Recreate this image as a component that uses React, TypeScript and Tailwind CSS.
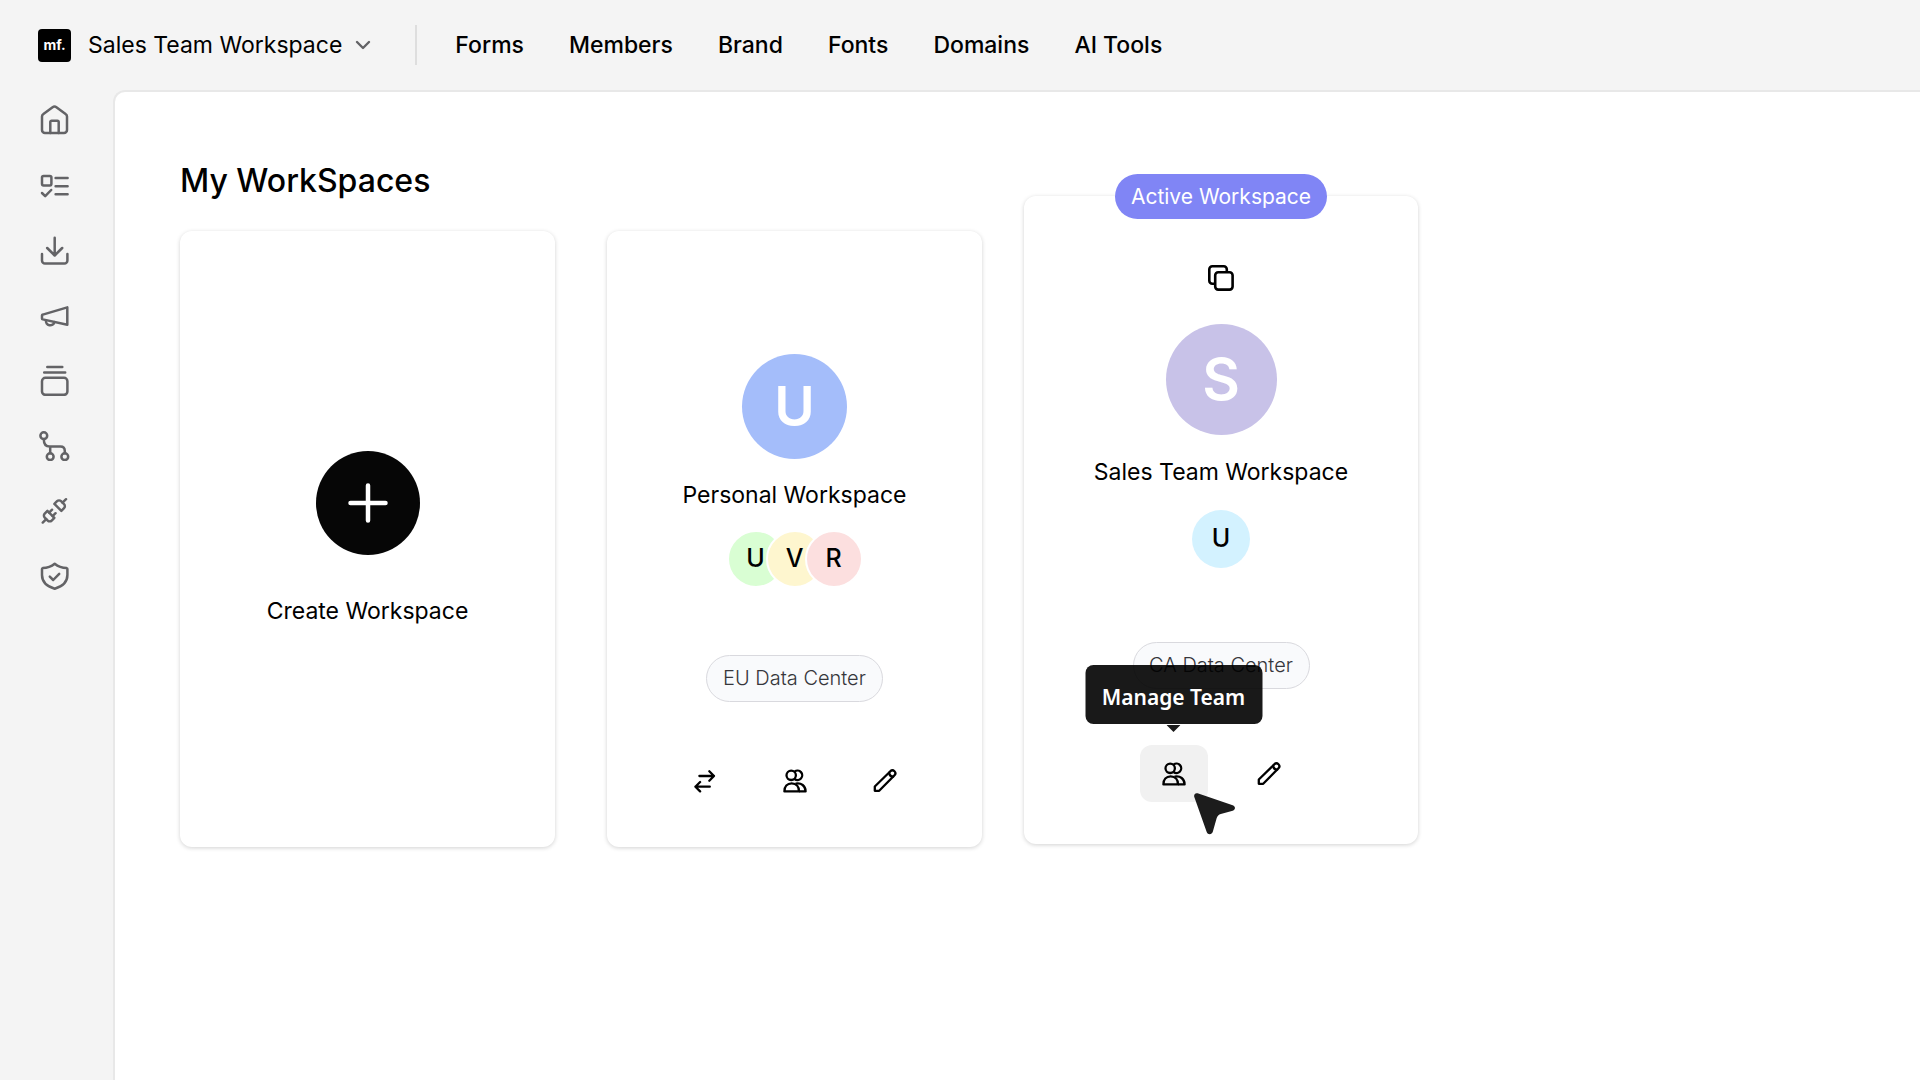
import React from 'react';
import type { ReactNode } from 'react';

interface Member {
  letter: string;
  color: string;
}

const NAV_LINKS = ['Forms', 'Members', 'Brand', 'Fonts', 'Domains', 'AI Tools'];

const PERSONAL_MEMBERS: Member[] = [
  { letter: 'U', color: 'bg-[#d9fed3]' },
  { letter: 'V', color: 'bg-[#fef6cf]' },
  { letter: 'R', color: 'bg-[#fcdfdf]' },
];

const SIDEBAR: { label: string; icon: ReactNode }[] = [
  {
    label: 'Home',
    icon: (
      <>
        <path d="M4 12.6c0-1.1.5-2 1.4-2.6l9.2-6.8a3.2 3.2 0 0 1 3.8 0l9.2 6.8c.9.6 1.4 1.5 1.4 2.6V26a3 3 0 0 1-3 3H7a3 3 0 0 1-3-3Z" />
        <path d="M12.3 29V18a1.3 1.3 0 0 1 1.3-1.3h5.8a1.3 1.3 0 0 1 1.3 1.3v11" />
      </>
    ),
  },
  {
    label: 'Tasks',
    icon: (
      <>
        <rect x="4" y="7" width="9.4" height="9.4" rx="1.6" />
        <path d="M17.6 9h12M17.6 17.2h12M17.6 25.3h12M4 24l3.2 3.2 6-6.2" />
      </>
    ),
  },
  {
    label: 'Downloads',
    icon: <path d="M16.7 3.7v17.6M9.2 14l7.5 7.5 7.5-7.5M4 20v6.5a3 3 0 0 0 3 3h19.4a3 3 0 0 0 3-3V20" />,
  },
  {
    label: 'Campaigns',
    icon: (
      <>
        <path d="M4 16.6c0-.5.3-.9.8-1L29.3 8.4v17.4L4.8 20.4c-.5-.1-.8-.5-.8-1Z" />
        <path d="M8 21.3a4.3 4.3 0 0 0 8.4 1.8" />
      </>
    ),
  },
  {
    label: 'Collections',
    icon: (
      <>
        <path d="M9.3 3h15M6.2 8.6h21" />
        <rect x="4" y="13.8" width="25.4" height="17" rx="3.4" />
      </>
    ),
  },
  {
    label: 'Workflows',
    icon: (
      <>
        <circle cx="5.8" cy="6.7" r="3.4" />
        <circle cx="12.2" cy="27.7" r="3.4" />
        <circle cx="26.8" cy="27.7" r="3.4" />
        <path d="M5.8 10.2c0 5 1.6 7.4 6 7.4h10.6c3 0 4.4 1.6 4.4 4.4v2.2M12.2 17.8v6.4" />
      </>
    ),
  },
  {
    label: 'Integrations',
    icon: (
      <g transform="translate(2.4 2.9) scale(1.165)" strokeWidth="2.1">
        <path d="m19 5 3-3M2 22l3-3M7.5 13.5 10 11M10.5 16.5 13 14" />
        <path d="M6.3 20.3a2.4 2.4 0 0 0 3.4 0L12 18l-6-6-2.3 2.3a2.4 2.4 0 0 0 0 3.4Z" />
        <path d="m12 6 6 6 2.3-2.3a2.4 2.4 0 0 0 0-3.4l-2.6-2.6a2.4 2.4 0 0 0-3.4 0Z" />
      </g>
    ),
  },
  {
    label: 'Security',
    icon: (
      <>
        <path d="M16.7 4.8c3.4 2.8 7.4 4.2 12 4.3.4.1.7.4.7.9v6c0 6.6-5 11.4-12.7 13.7C9 27.4 4 22.6 4 16v-6c0-.5.3-.8.7-.9 4.6-.1 8.6-1.5 12-4.3Z" />
        <path d="m11.8 17.6 3.4 3.4 6-6.2" />
      </>
    ),
  },
];

function UsersIcon() {
  return (
    <svg viewBox="0 0 24 24" className="size-6" fill="none" stroke="currentColor" strokeWidth="2.3" strokeLinejoin="round" aria-hidden="true">
      <circle cx="8.2" cy="6.3" r="4.7" />
      <path d="M11.6 2.6a4.7 4.7 0 1 1 0 7.4" />
      <path d="M1.4 22.4c0-4.7 2.8-8 7.3-8s7.3 3.3 7.3 8Z" />
      <path d="M12.6 14.6c5.6-1.2 10 2.4 10 7.8H16" />
    </svg>
  );
}

function PencilIcon() {
  return (
    <svg viewBox="0 0 24 24" className="size-6" fill="none" stroke="currentColor" strokeWidth="2.3" strokeLinecap="round" strokeLinejoin="round" aria-hidden="true">
      <path d="M17.4 2.2a2.9 2.9 0 0 1 4.1 4.1L6.2 21.8H1.8v-4.3Z" />
      <path d="M16.2 3.6c.1 2.4 1.6 3.9 4 4" />
    </svg>
  );
}

function SwapIcon() {
  return (
    <svg viewBox="0 0 24 24" className="size-6" fill="none" stroke="currentColor" strokeWidth="2.3" strokeLinecap="round" strokeLinejoin="round" aria-hidden="true">
      <path d="M6.4 7H21M16.3 2.3 21 7l-4.7 4.7" />
      <path d="M16.8 17.7H2.4M7.1 13l-4.7 4.7 4.7 4.7" />
    </svg>
  );
}

function MemberBadge({ letter, color }: Member) {
  return (
    <span className={`flex size-[58px] items-center justify-center rounded-full border-2 border-white text-[25px] font-medium ${color}`}>
      {letter}
    </span>
  );
}

function DataCenter({ name }: { name: string }) {
  return (
    <span className="flex h-[47px] w-[177px] items-center justify-center rounded-full border border-[#d9d9de] bg-[#f9fafc] pb-0.5 text-xl font-light whitespace-nowrap text-[#36363b]">
      {name}
    </span>
  );
}

export default function App() {
  return (
    <div className="flex min-h-screen flex-col bg-[#f4f4f4] font-['Inter','Liberation_Sans',sans-serif] text-black">
      <header className="flex h-[90px] items-center pl-[38px]">
        <button type="button" className="flex items-center">
          <span className="flex size-[33px] items-center justify-center rounded bg-black text-sm leading-none font-bold text-white">mf.</span>
          <span className="ml-[17px] text-[23px]">Sales Team Workspace</span>
          <svg viewBox="0 0 16 16" className="ml-[13px] size-4" fill="none" stroke="#636366" strokeWidth="2.4" strokeLinecap="round" strokeLinejoin="round" aria-hidden="true">
            <path d="m2 5 6 6 6-6" />
          </svg>
        </button>
        <div className="ml-11 h-10 w-0.5 bg-[#dedede]" />
        <nav className="ml-[38px] flex gap-[45px]">
          {NAV_LINKS.map((link) => (
            <a key={link} href="#" className="text-[23px] font-medium whitespace-nowrap">
              {link}
            </a>
          ))}
        </nav>
      </header>

      <div className="flex flex-1">
        <aside className="w-[113px] shrink-0 pt-[14px] pl-[38px]">
          <nav className="flex flex-col gap-[33px]">
            {SIDEBAR.map(({ label, icon }) => (
              <a key={label} href="#" aria-label={label} className="size-8 text-[#636366]">
                <svg viewBox="0 0 32 32" className="size-8" fill="none" stroke="currentColor" strokeWidth="2.5" strokeLinecap="round" strokeLinejoin="round" aria-hidden="true">
                  {icon}
                </svg>
              </a>
            ))}
          </nav>
        </aside>

        <main className="flex-1 rounded-tl-xl border-t-2 border-l-2 border-[#e8e8e8] bg-white pl-[65px]">
          <h1 className="mt-[69px] text-[32px] leading-10 font-medium">My WorkSpaces</h1>

          <section className="-mt-[5px] flex items-start">
            <button
              type="button"
              className="mt-[35px] flex h-[616px] w-[375px] shrink-0 flex-col items-center rounded-xl bg-white pt-[220px] shadow-[0_1px_4px_rgba(0,0,0,0.18)]"
            >
              <span className="flex size-[104px] items-center justify-center rounded-full bg-[#060606]">
                <svg viewBox="0 0 40 40" className="size-10" stroke="#fff" strokeWidth="4.5" strokeLinecap="round" aria-hidden="true">
                  <path d="M20 2.5v35M2.5 20h35" />
                </svg>
              </span>
              <span className="mt-10 text-[23px] leading-8">Create Workspace</span>
            </button>

            <article className="mt-[35px] ml-[52px] flex h-[616px] w-[375px] shrink-0 flex-col items-center rounded-xl bg-white pt-[123px] shadow-[0_1px_4px_rgba(0,0,0,0.18)]">
              <span className="flex size-[105px] items-center justify-center rounded-full bg-[#a4bdfa] text-[55px] font-semibold text-white">U</span>
              <h2 className="mt-5 text-[23px] leading-8">Personal Workspace</h2>
              <div className="mt-[19px] flex -space-x-[19px]">
                {PERSONAL_MEMBERS.map((member) => (
                  <MemberBadge key={member.letter} {...member} />
                ))}
              </div>
              <div className="mt-[67px]">
                <DataCenter name="EU Data Center" />
              </div>
              <div className="mt-[67px] flex gap-[66px]">
                <button type="button" aria-label="Switch workspace">
                  <SwapIcon />
                </button>
                <button type="button" aria-label="Manage team">
                  <UsersIcon />
                </button>
                <button type="button" aria-label="Rename">
                  <PencilIcon />
                </button>
              </div>
            </article>

            <article className="relative ml-[42px] flex h-[648px] w-[394px] shrink-0 flex-col items-center rounded-xl bg-white pt-[69px] shadow-[0_1px_4px_rgba(0,0,0,0.18)]">
              <span className="absolute -top-[22px] left-1/2 flex h-[45px] w-[212px] -translate-x-1/2 items-center justify-center rounded-full bg-[#8085f5] text-[21px] whitespace-nowrap text-white">
                Active Workspace
              </span>
              <button type="button" aria-label="Copy workspace">
                <svg viewBox="0 0 26 26" className="size-[26px]" fill="none" stroke="currentColor" strokeWidth="2.6" strokeLinejoin="round" aria-hidden="true">
                  <rect x="7.2" y="7.2" width="17.4" height="17.4" rx="3" />
                  <path d="M7.2 18.8H4.3a3 3 0 0 1-3-3V4.3a3 3 0 0 1 3-3h11.5a3 3 0 0 1 3 3v2.9" />
                </svg>
              </button>
              <span className="mt-[33px] flex size-[111px] items-center justify-center rounded-full bg-[#c8c2e8] text-[58px] font-semibold text-white">S</span>
              <h2 className="mt-[21px] text-[23px] leading-8">Sales Team Workspace</h2>
              <div className="mt-[22px] flex">
                <span className="flex size-[58px] items-center justify-center rounded-full bg-[#d3f2ff] text-[25px] font-medium">U</span>
              </div>
              <div className="mt-[74px]">
                <DataCenter name="CA Data Center" />
              </div>
              <div className="mt-14 flex gap-[27px]">
                <div className="relative">
                  <button type="button" aria-label="Manage team" aria-describedby="manage-team-tip" className="flex h-[57px] w-[68px] items-center justify-center rounded-xl bg-[#f1f1f1]">
                    <UsersIcon />
                  </button>
                  <div
                    id="manage-team-tip"
                    role="tooltip"
                    className="absolute bottom-[78px] left-1/2 flex h-[59px] w-[177px] -translate-x-1/2 items-center justify-center rounded-lg bg-black/90 pt-1.5 font-['Noto_Sans','Open_Sans',sans-serif] text-[21px] font-semibold whitespace-nowrap text-white"
                  >
                    Manage Team
                    <svg viewBox="0 0 14 7" className="absolute top-full left-1/2 mt-px h-[7px] w-3.5 -translate-x-1/2" fill="#1a1a1a" aria-hidden="true">
                      <path d="M0 0h14L7 7Z" />
                    </svg>
                  </div>
                  <svg viewBox="0 0 42 42" className="absolute top-12 left-[54px] size-[42px]" fill="#1c1c1c" aria-hidden="true">
                    <path d="M3.6.3 38.7 12.2c3 1 3 4.6 0 5.5L26.8 21c-2 .6-3.5 2.1-4.1 4.1l-3.9 13.7c-.9 3.1-5 3.2-6.1.2L.3 4C-.5 1.7 1.3-.5 3.6.3Z" />
                  </svg>
                </div>
                <button type="button" aria-label="Rename" className="flex h-[57px] w-[68px] items-center justify-center rounded-xl">
                  <PencilIcon />
                </button>
              </div>
            </article>
          </section>
        </main>
      </div>
    </div>
  );
}
